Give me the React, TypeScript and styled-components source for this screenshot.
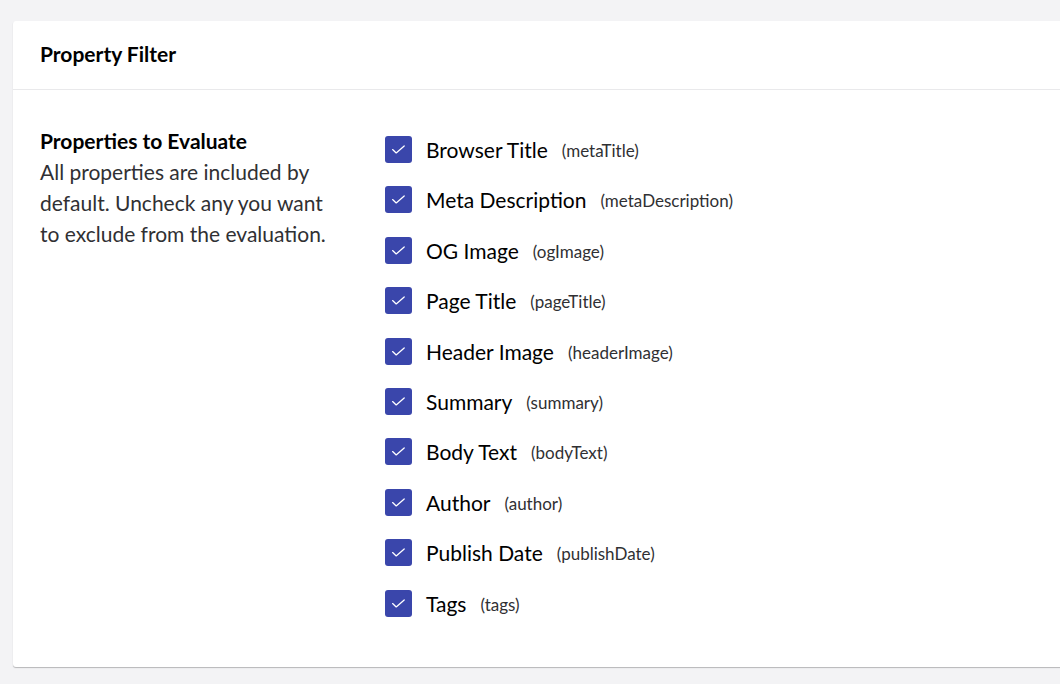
import React from 'react';
import styled, { createGlobalStyle } from 'styled-components';

const GlobalStyle = createGlobalStyle`
  html, body {
    margin: 0;
    padding: 0;
    background: #f3f3f5;
    font-family: Lato, "Open Sans", sans-serif;
    color: #1b264f;
    overflow: hidden;
  }
`;

const Page = styled.div`
  padding: 21px 0 0 13px;
  height: 684px;
  box-sizing: border-box;
`;

const Card = styled.section`
  width: 1080px;
  height: 646px;
  background: #fff;
  border-radius: 3px;
  box-shadow: 0 1px 1px rgba(0, 0, 0, 0.25);
  display: flex;
  flex-direction: column;
  overflow: hidden;
`;

const Header = styled.header`
  flex-shrink: 0;
  height: 69px;
  box-sizing: border-box;
  padding: 0 27px 4px;
  display: flex;
  align-items: center;
  border-bottom: 1px solid #e9e9eb;
`;

const Title = styled.h2`
  margin: 0;
  font-size: 21px;
  font-weight: 700;
  color: #000;
`;

const Body = styled.div`
  display: grid;
  grid-template-columns: 345px 1fr;
  padding: 35px 27px 0;
`;

const Intro = styled.div`
  padding-right: 50px;
`;

const IntroTitle = styled.div`
  font-size: 21px;
  font-weight: 700;
  color: #000;
  line-height: 31px;
`;

const IntroText = styled.p`
  margin: 0;
  font-size: 21px;
  line-height: 31px;
  color: #303033;
`;

const List = styled.ul`
  list-style: none;
  margin: 0;
  padding: 11px 0 0;
`;

const Row = styled.li`
  height: 50.4px;
  display: flex;
  align-items: flex-start;
`;

const Box = styled.span`
  width: 27px;
  height: 27px;
  border-radius: 3px;
  background: #3a46ab;
  display: flex;
  align-items: center;
  justify-content: center;
  flex-shrink: 0;
  margin-right: 14px;
`;

const Label = styled.span`
  font-size: 21px;
  color: #000;
  line-height: 27px;
`;

const Alias = styled.span`
  font-size: 17px;
  color: #303033;
  margin-left: 14px;
  line-height: 29px;
`;

const props = [
  ['Browser Title', 'metaTitle'],
  ['Meta Description', 'metaDescription'],
  ['OG Image', 'ogImage'],
  ['Page Title', 'pageTitle'],
  ['Header Image', 'headerImage'],
  ['Summary', 'summary'],
  ['Body Text', 'bodyText'],
  ['Author', 'author'],
  ['Publish Date', 'publishDate'],
  ['Tags', 'tags'],
];

const Check = () => (
  <svg width="17" height="17" viewBox="0 0 17 17" fill="none">
    <path d="M2.6 8.6l3.6 3.3L14.2 5" stroke="#fff" strokeWidth="1.3" strokeLinecap="round" strokeLinejoin="round" />
  </svg>
);

export default function App() {
  return (
    <Page>
      <GlobalStyle />
      <Card>
        <Header>
          <Title>Property Filter</Title>
        </Header>
        <Body>
          <Intro>
            <IntroTitle>Properties to Evaluate</IntroTitle>
            <IntroText>
              All properties are included by default. Uncheck any you want to exclude from the evaluation.
            </IntroText>
          </Intro>
          <List>
            {props.map(([label, alias]) => (
              <Row key={alias}>
                <Box>
                  <Check />
                </Box>
                <Label>{label}</Label>
                <Alias>({alias})</Alias>
              </Row>
            ))}
          </List>
        </Body>
      </Card>
    </Page>
  );
}
